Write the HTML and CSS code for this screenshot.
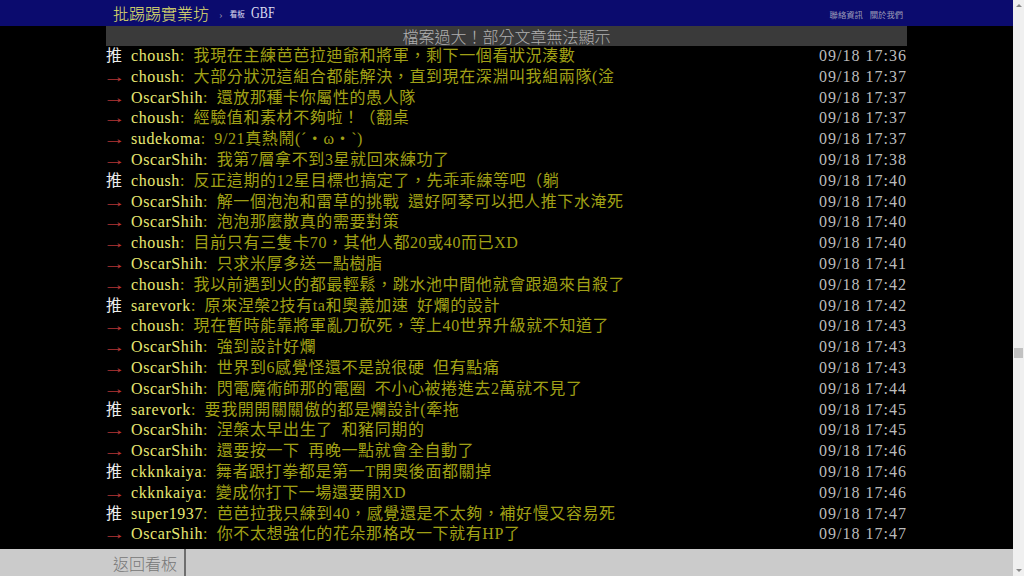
FILE: index.html
```html
<!DOCTYPE html>
<html lang="zh-TW">
<head>
    <meta charset="UTF-8">
    <title>[閒聊] GBF - 看板 GBF - 批踢踢實業坊</title>
    <link rel="stylesheet" href="styles.css">
</head>
<body>
    <div class="page">
        <div id="topbar-container">
            <div id="topbar" class="bbs-content">
                <a id="logo" href="#">批踢踢實業坊</a>
                <span class="crumb">›</span>
                <a class="board" href="#"><span class="board-label">看板</span><span class="board-name">GBF</span></a>
                <div class="links">
                    <a class="small" href="#">聯絡資訊</a>
                    <a class="small" href="#">關於我們</a>
                </div>
            </div>
        </div>

        <div id="main-content" class="bbs-screen">
            <div class="warning-box">檔案過大！部分文章無法顯示</div>

            <div class="push"><span class="push-tag hl">推 </span><span class="push-userid">choush</span><span class="push-content">: 我現在主練芭芭拉迪爺和將軍，剩下一個看狀況湊數</span><span class="push-ipdatetime">09/18 17:36</span></div>
            <div class="push"><span class="push-tag arrow">→</span><span class="push-userid">choush</span><span class="push-content">: 大部分狀況這組合都能解決，直到現在深淵叫我組兩隊(淦</span><span class="push-ipdatetime">09/18 17:37</span></div>
            <div class="push"><span class="push-tag arrow">→</span><span class="push-userid">OscarShih</span><span class="push-content">: 還放那種卡你屬性的愚人隊</span><span class="push-ipdatetime">09/18 17:37</span></div>
            <div class="push"><span class="push-tag arrow">→</span><span class="push-userid">choush</span><span class="push-content">: 經驗值和素材不夠啦！（翻桌</span><span class="push-ipdatetime">09/18 17:37</span></div>
            <div class="push"><span class="push-tag arrow">→</span><span class="push-userid">sudekoma</span><span class="push-content">: 9/21真熱鬧(ˊ・ω・ˋ)</span><span class="push-ipdatetime">09/18 17:37</span></div>
            <div class="push"><span class="push-tag arrow">→</span><span class="push-userid">OscarShih</span><span class="push-content">: 我第7層拿不到3星就回來練功了</span><span class="push-ipdatetime">09/18 17:38</span></div>
            <div class="push"><span class="push-tag hl">推 </span><span class="push-userid">choush</span><span class="push-content">: 反正這期的12星目標也搞定了，先乖乖練等吧（躺</span><span class="push-ipdatetime">09/18 17:40</span></div>
            <div class="push"><span class="push-tag arrow">→</span><span class="push-userid">OscarShih</span><span class="push-content">: 解一個泡泡和雷草的挑戰 還好阿琴可以把人推下水淹死</span><span class="push-ipdatetime">09/18 17:40</span></div>
            <div class="push"><span class="push-tag arrow">→</span><span class="push-userid">OscarShih</span><span class="push-content">: 泡泡那麼散真的需要對策</span><span class="push-ipdatetime">09/18 17:40</span></div>
            <div class="push"><span class="push-tag arrow">→</span><span class="push-userid">choush</span><span class="push-content">: 目前只有三隻卡70，其他人都20或40而已XD</span><span class="push-ipdatetime">09/18 17:40</span></div>
            <div class="push"><span class="push-tag arrow">→</span><span class="push-userid">OscarShih</span><span class="push-content">: 只求米厚多送一點樹脂</span><span class="push-ipdatetime">09/18 17:41</span></div>
            <div class="push"><span class="push-tag arrow">→</span><span class="push-userid">choush</span><span class="push-content">: 我以前遇到火的都最輕鬆，跳水池中間他就會跟過來自殺了</span><span class="push-ipdatetime">09/18 17:42</span></div>
            <div class="push"><span class="push-tag hl">推 </span><span class="push-userid">sarevork</span><span class="push-content">: 原來涅槃2技有ta和奧義加速 好爛的設計</span><span class="push-ipdatetime">09/18 17:42</span></div>
            <div class="push"><span class="push-tag arrow">→</span><span class="push-userid">choush</span><span class="push-content">: 現在暫時能靠將軍亂刀砍死，等上40世界升級就不知道了</span><span class="push-ipdatetime">09/18 17:43</span></div>
            <div class="push"><span class="push-tag arrow">→</span><span class="push-userid">OscarShih</span><span class="push-content">: 強到設計好爛</span><span class="push-ipdatetime">09/18 17:43</span></div>
            <div class="push"><span class="push-tag arrow">→</span><span class="push-userid">OscarShih</span><span class="push-content">: 世界到6感覺怪還不是說很硬 但有點痛</span><span class="push-ipdatetime">09/18 17:43</span></div>
            <div class="push"><span class="push-tag arrow">→</span><span class="push-userid">OscarShih</span><span class="push-content">: 閃電魔術師那的電圈 不小心被捲進去2萬就不見了</span><span class="push-ipdatetime">09/18 17:44</span></div>
            <div class="push"><span class="push-tag hl">推 </span><span class="push-userid">sarevork</span><span class="push-content">: 要我開開關關傲的都是爛設計(牽拖</span><span class="push-ipdatetime">09/18 17:45</span></div>
            <div class="push"><span class="push-tag arrow">→</span><span class="push-userid">OscarShih</span><span class="push-content">: 涅槃太早出生了 和豬同期的</span><span class="push-ipdatetime">09/18 17:45</span></div>
            <div class="push"><span class="push-tag arrow">→</span><span class="push-userid">OscarShih</span><span class="push-content">: 還要按一下 再晚一點就會全自動了</span><span class="push-ipdatetime">09/18 17:46</span></div>
            <div class="push"><span class="push-tag hl">推 </span><span class="push-userid">ckknkaiya</span><span class="push-content">: 舞者跟打拳都是第一T開奧後面都關掉</span><span class="push-ipdatetime">09/18 17:46</span></div>
            <div class="push"><span class="push-tag arrow">→</span><span class="push-userid">ckknkaiya</span><span class="push-content">: 變成你打下一場還要開XD</span><span class="push-ipdatetime">09/18 17:46</span></div>
            <div class="push"><span class="push-tag hl">推 </span><span class="push-userid">super1937</span><span class="push-content">: 芭芭拉我只練到40，感覺還是不太夠，補好慢又容易死</span><span class="push-ipdatetime">09/18 17:47</span></div>
            <div class="push"><span class="push-tag arrow">→</span><span class="push-userid">OscarShih</span><span class="push-content">: 你不太想強化的花朵那格改一下就有HP了</span><span class="push-ipdatetime">09/18 17:47</span></div>
        </div>

        <div id="navigation-container">
            <div id="navigation" class="bbs-content">
                <a class="board" href="#">返回看板</a>
                <div class="bar"></div>
            </div>
        </div>
    </div>

    <div class="scrollbar">
        <div class="arrow-up"></div>
        <div class="track"><div class="thumb"></div></div>
        <div class="arrow-down"></div>
    </div>
</body>
</html>
```

FILE: styles.css
```css
html, body {
    height: 576px;
    overflow: hidden;
}
body {
    margin: 0;
    background: #000;
    color: #ccc;
    font-family: "Liberation Serif", "Noto Sans CJK TC", serif;
    font-size: 16px;
    display: flex;
}
a {
    text-decoration: none;
}
.page {
    flex: 1;
    height: 576px;
    overflow: hidden;
}
.bbs-content, .bbs-screen {
    width: 801px;
    margin: 0 auto;
}

/* top bar */
#topbar-container {
    background: #0b0b6e;
}
#topbar {
    height: 26px;
    display: flex;
    align-items: center;
    box-sizing: border-box;
    padding: 0 4px 1px 7px;
}
#logo {
    color: #e4e46c;
    font-family: "Noto Sans CJK TC", sans-serif;
    font-weight: 300;
    font-size: 16px;
}
#topbar .crumb {
    color: #8a8aa8;
    font-size: 11px;
    margin: 2px 7px 0 10px;
}
#topbar .board {
    color: #dcdcf0;
    font-size: 16px;
    display: flex;
    align-items: center;
}
#topbar .board-label {
    font-family: "Noto Sans CJK TC", sans-serif;
    font-size: 7.5px;
    margin: 2px 6px 0 0;
}
#topbar .board-name {
    display: inline-block;
    transform: scaleX(0.76);
    transform-origin: left center;
}
#topbar .links {
    margin-left: auto;
    display: flex;
    gap: 7px;
}
#topbar .small {
    color: #9c9cb8;
    font-family: "Noto Sans CJK TC", sans-serif;
    font-size: 8.3px;
    margin-top: 2px;
}

/* article */
.warning-box {
    background: #3a3a3a;
    color: #b0b0b0;
    text-align: center;
    height: 20px;
    line-height: 20px;
    font-family: "Noto Sans CJK TC", sans-serif;
    font-weight: 300;
}
.push {
    display: flex;
    height: 20.8px;
    line-height: 20.8px;
    white-space: pre;
}
.push-tag {
    width: 25px;
}
.push-tag.hl {
    color: #ececec;
}
.push-tag.arrow {
    color: #b43636;
    width: 11px;
    margin: 0 17px 0 -3px;
    transform: scaleX(1.45);
    transform-origin: left center;
}
.push-userid {
    color: #e8e872;
    letter-spacing: 0.6px;
}
.push-content {
    flex: 1;
    color: #a0a016;
    letter-spacing: 0.6px;
    word-spacing: 4px;
}
.push-ipdatetime {
    color: #bcbcbc;
    letter-spacing: 1px;
}

/* bottom navigation */
#navigation-container {
    position: fixed;
    left: 0;
    right: 11px;
    bottom: 0;
    height: 27px;
    background: #cbcbcb;
}
#navigation {
    height: 27px;
    display: flex;
    align-items: center;
    box-sizing: border-box;
    padding-left: 7px;
}
#navigation .board {
    color: #777;
    font-family: "Noto Sans CJK TC", sans-serif;
    font-weight: 300;
    font-size: 16px;
}
#navigation .bar {
    align-self: stretch;
    width: 2px;
    background: #6e6e6e;
    margin-left: 7px;
}

/* fake scrollbar */
.scrollbar {
    width: 11px;
    background: #f0f0f0;
    display: flex;
    flex-direction: column;
    align-items: center;
}
.arrow-up, .arrow-down {
    width: 0;
    height: 0;
    border-left: 3px solid transparent;
    border-right: 3px solid transparent;
    margin: 4px 0;
}
.arrow-up {
    border-bottom: 3px solid #888;
}
.arrow-down {
    border-top: 3px solid #888;
}
.track {
    flex: 1;
    align-self: stretch;
    padding-top: 337px;
}
.thumb {
    height: 10px;
    margin: 0 1px;
    background: #c2c2c2;
}
```
